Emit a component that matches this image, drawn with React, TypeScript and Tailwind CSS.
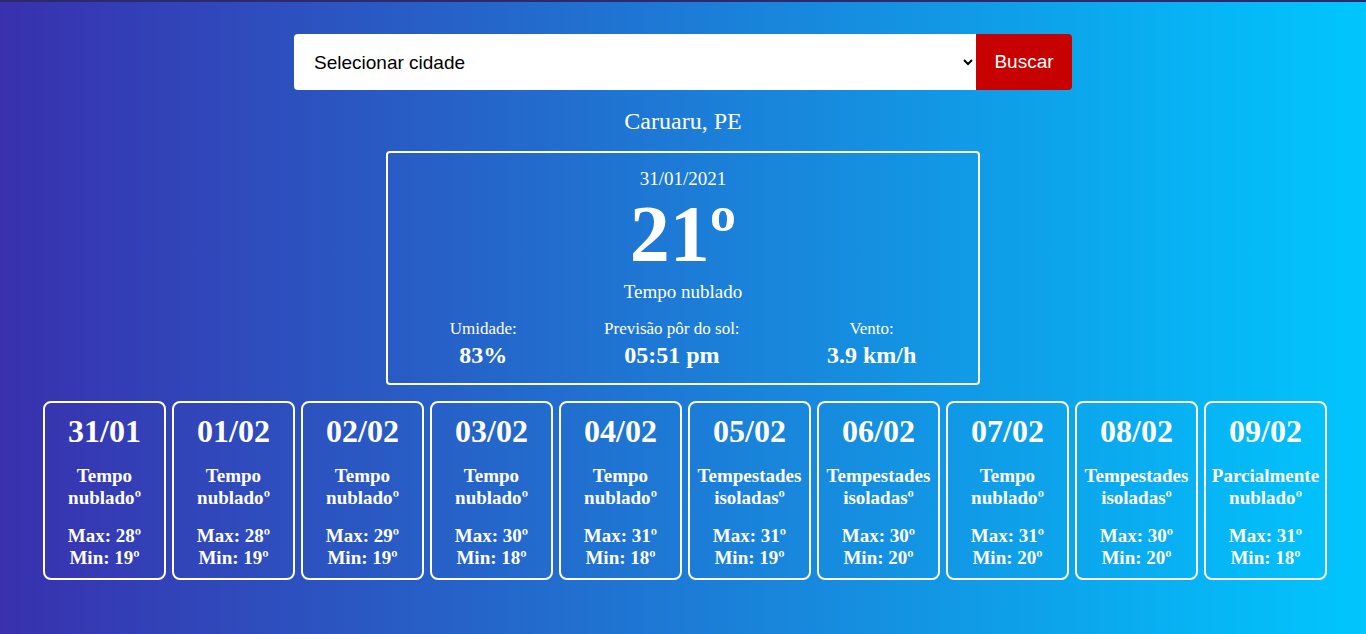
import React from "react";

const days = [
  { d: "31/01", t: ["Tempo", "nublado"], max: 28, min: 19 },
  { d: "01/02", t: ["Tempo", "nublado"], max: 28, min: 19 },
  { d: "02/02", t: ["Tempo", "nublado"], max: 29, min: 19 },
  { d: "03/02", t: ["Tempo", "nublado"], max: 30, min: 18 },
  { d: "04/02", t: ["Tempo", "nublado"], max: 31, min: 18 },
  { d: "05/02", t: ["Tempestades", "isoladas"], max: 31, min: 19 },
  { d: "06/02", t: ["Tempestades", "isoladas"], max: 30, min: 20 },
  { d: "07/02", t: ["Tempo", "nublado"], max: 31, min: 20 },
  { d: "08/02", t: ["Tempestades", "isoladas"], max: 30, min: 20 },
  { d: "09/02", t: ["Parcialmente", "nublado"], max: 31, min: 18 },
];

export default function App() {
  return (
    <div className="w-full h-[634px] overflow-hidden bg-[linear-gradient(to_right,#3930ae,#00c6fe)] text-white border-t-2 border-[#2c2a6c] [font-family:'Liberation_Serif',serif]">
      <div className="flex justify-center pt-[32px]">
        <div className="flex w-[778px] h-[56px]">
          <select className="flex-1 h-full bg-white text-black rounded-l-[4px] pl-[16px] pr-[4px] text-[19px] [font-family:'Liberation_Sans',sans-serif] outline-none">
            <option>Selecionar cidade</option>
          </select>
          <button className="w-[96px] h-full bg-[#c70000] text-white rounded-r-[4px] text-[19px] [font-family:'Liberation_Sans',sans-serif]">
            Buscar
          </button>
        </div>
      </div>
      <div className="text-center text-[24px] leading-[28px] mt-[17px]">Caruaru, PE</div>
      <div className="flex justify-center mt-[16px]">
        <div className="w-[594px] h-[234px] border-2 border-white rounded-[4px] px-[18px] pt-[15px] flex flex-col items-center">
          <div className="text-[19px] leading-[22px]">31/01/2021</div>
          <div className="text-[80px] leading-[88px] font-bold">21º</div>
          <div className="text-[19px] leading-[24px] mt-[2px]">Tempo nublado</div>
          <div className="flex justify-around w-full mt-[15px]">
            <div className="flex flex-col items-center">
              <div className="text-[17px] leading-[20px]">Umidade:</div>
              <div className="text-[24px] leading-[32px] font-bold">83%</div>
            </div>
            <div className="flex flex-col items-center">
              <div className="text-[17px] leading-[20px]">Previsão pôr do sol:</div>
              <div className="text-[24px] leading-[32px] font-bold">05:51 pm</div>
            </div>
            <div className="flex flex-col items-center">
              <div className="text-[17px] leading-[20px]">Vento:</div>
              <div className="text-[24px] leading-[32px] font-bold">3.9 km/h</div>
            </div>
          </div>
        </div>
      </div>
      <div className="flex justify-center gap-[6px] mt-[16px] pl-[4px]">
        {days.map((x) => (
          <div
            key={x.d}
            className="w-[123px] h-[179px] border-2 border-white rounded-[8px] flex flex-col items-center font-bold text-center pt-[9px]"
          >
            <div className="text-[32px] leading-[38px]">{x.d}</div>
            <div className="text-[19px] leading-[22px] mt-[15px]">
              {x.t[0]}
              <br />
              {x.t[1]}º
            </div>
            <div className="text-[19px] leading-[22px] mt-[16px]">
              Max: {x.max}º
              <br />
              Min: {x.min}º
            </div>
          </div>
        ))}
      </div>
    </div>
  );
}
